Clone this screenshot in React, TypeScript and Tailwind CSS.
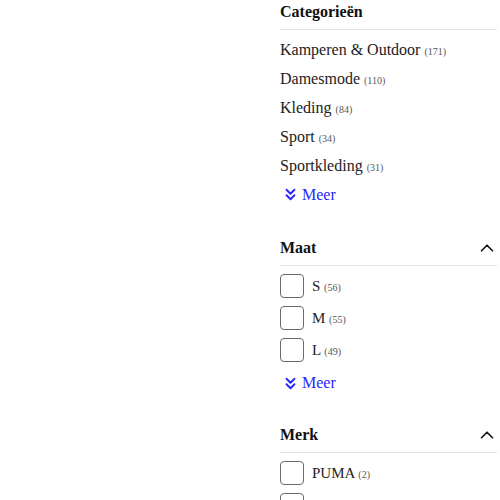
import { ChevronUp, ChevronsDown } from 'lucide-react'

const serif = { fontFamily: '"Liberation Serif", "DejaVu Serif", serif' }

const categories = [
  { name: 'Kamperen & Outdoor', count: 171 },
  { name: 'Damesmode', count: 110 },
  { name: 'Kleding', count: 84 },
  { name: 'Sport', count: 34 },
  { name: 'Sportkleding', count: 31 },
]

const sizes = [
  { name: 'S', count: 56 },
  { name: 'M', count: 55 },
  { name: 'L', count: 49 },
]

function Meer() {
  return (
    <button className="flex items-center gap-[2px] pl-[1px] text-[16px] text-[#2626ff] leading-none">
      <ChevronsDown className="size-[19px]" strokeWidth={2.4} />
      <span>Meer</span>
    </button>
  )
}

function Heading({ title, toggle }: { title: string; toggle?: boolean }) {
  return (
    <div className="flex items-center justify-between h-[30px] pb-[6px] border-b border-[#e4e4e4]">
      <span className="font-bold text-[16px] text-[#111]">{title}</span>
      {toggle && <ChevronUp className="size-[22px] -mr-[1px] text-[#111]" strokeWidth={1.8} />}
    </div>
  )
}

function CheckRow({ name, count }: { name?: string; count?: number }) {
  return (
    <label className="flex items-center gap-[8px] h-[32px]">
      <span className="size-[24px] rounded-[4px] border border-[#6b6b6b] bg-white" />
      {name && (
        <span className="text-[15px] text-[#222]">
          {name} <span className="text-[10px] text-[#555]">({count})</span>
        </span>
      )}
    </label>
  )
}

export default function App() {
  return (
    <div className="w-[500px] h-[500px] overflow-hidden bg-white" style={serif}>
      <div className="ml-[280px] w-[217px]">
        <Heading title="Categorieën" />
        <ul className="pt-[5px]">
          {categories.map((c) => (
            <li key={c.name} className="h-[29px] flex items-center text-[16px] text-[#222]">
              <span>
                {c.name} <span className="text-[10px] text-[#555]">({c.count})</span>
              </span>
            </li>
          ))}
        </ul>
        <div className="h-[29px] flex items-center">
          <Meer />
        </div>

        <div className="mt-[27px]">
          <Heading title="Maat" toggle />
          <div className="pt-[4px]">
            {sizes.map((s) => (
              <CheckRow key={s.name} {...s} />
            ))}
          </div>
          <div className="h-[34px] flex items-center">
            <Meer />
          </div>
        </div>

        <div className="mt-[23px]">
          <Heading title="Merk" toggle />
          <div className="pt-[4px]">
            <CheckRow name="PUMA" count={2} />
            <CheckRow />
          </div>
        </div>
      </div>
    </div>
  )
}
